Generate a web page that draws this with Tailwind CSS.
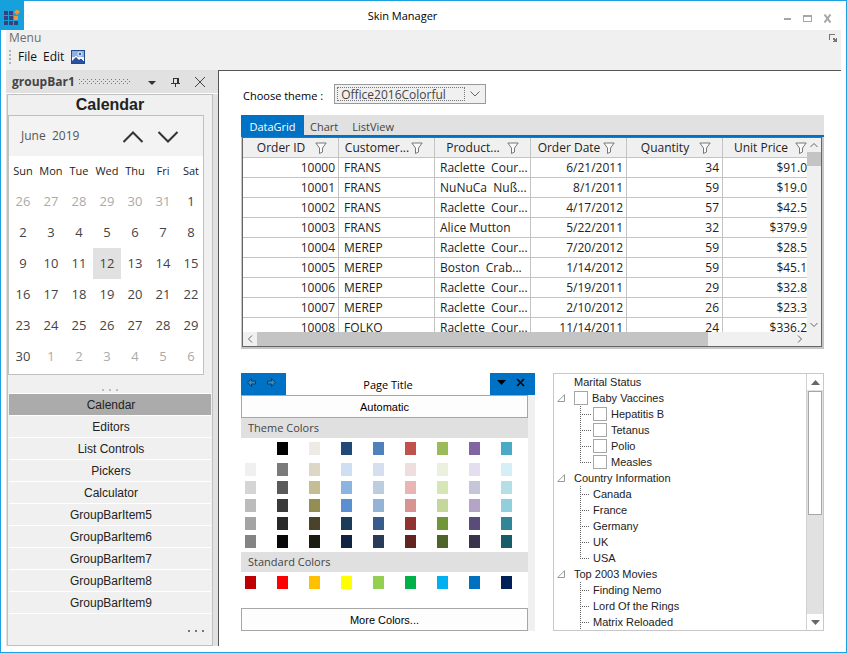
<!DOCTYPE html>
<html lang="en">
<head>
<meta charset="utf-8">
<title>Skin Manager</title>
<script src="https://cdn.jsdelivr.net/npm/@tailwindcss/browser@4"></script>
</head>
<body class="bg-white">
<div class="flex min-h-screen flex-col border border-[#1ba1e2] bg-white font-['Open_Sans','Noto_Sans',sans-serif] text-xs text-[#222]">

  <header class="flex h-[29px] items-center">
    <div class="-mt-px -ml-px flex h-[30px] w-6 justify-center bg-[#16a0dc] pt-[10px]">
      <svg class="h-4 w-4" viewBox="0 0 16 16" aria-hidden="true">
        <path fill="#34437c" d="M0 1h4v4H0zM5 1h4v4H5zM0 6h4v4H0zM5 6h4v4H5zM0 11h4v4H0zM5 11h4v4H5zM10 11h4v4h-4z"/>
        <path fill="#f2953a" d="M10 6h4v4h-4zM13 -1l3 3-3 3-3-3z"/>
      </svg>
    </div>
    <h1 class="flex-1 pt-px text-center text-[11px] text-black">Skin Manager</h1>
    <div class="flex items-center gap-2 pt-[6px] pr-[13px]">
      <button aria-label="Minimize" class="flex h-3 w-3 items-center justify-center"><svg class="h-[9px] w-[9px]" viewBox="0 0 9 9"><path fill="#a6a6a6" d="M1 4h7v2H1z"/></svg></button>
      <button aria-label="Maximize" class="flex h-3 w-3 items-center justify-center"><svg class="h-[9px] w-[9px]" viewBox="0 0 9 9"><path fill="#a6a6a6" fill-rule="evenodd" d="M0 1h9v7H0zM1 3v4h7V3z"/></svg></button>
      <button aria-label="Close" class="flex h-3 w-3 items-center justify-center"><svg class="h-[9px] w-[9px]" viewBox="0 0 9 9"><path stroke="#a6a6a6" stroke-width="2" d="M1.500 .5l6 8M7.500 .5l-6 8"/></svg></button>
    </div>
  </header>

  <div class="mx-[5px] mb-[6px] flex flex-1 flex-col">
    <div class="h-10 bg-[#f0f0f0]">
      <div class="flex h-[15px] items-center justify-between pr-1 pl-[3px] text-[#6d6d6d]">
        <span>Menu</span>
        <svg class="h-2 w-2" viewBox="0 0 8 8" aria-hidden="true"><path fill="#777" d="M0 0h6v1H1v5H0zM4 4h2v1h1V4h1v4H4V7h1V6H4z"/></svg>
      </div>
      <nav class="flex h-6 items-center pl-[3px] text-[#111]">
        <svg class="mr-[7px] h-[14px] w-[2px]" viewBox="0 0 2 14" aria-hidden="true"><path fill="#b4b4b4" d="M0 0h2v2H0zM0 4h2v2H0zM0 8h2v2H0zM0 12h2v2H0z"/></svg>
        <button class="mr-[6px]">File</button>
        <button class="mr-[7px]">Edit</button>
        <button aria-label="Picture">
          <svg class="h-[14px] w-[14px]" viewBox="0 0 14 14"><rect width="14" height="14" fill="#23498f"/><rect x="1" y="1" width="12" height="12" fill="#eef3fb"/><path fill="#8eafe0" d="M1 1h12v6H1z"/><circle cx="9" cy="4" r="2" fill="#3565b5" stroke="#f6faff"/><path fill="#29519f" d="M1 11l4-4 3 3 2-2 3 3v2H1z"/><path fill="none" stroke="#fff" d="M1 10l4-4 3 3 2-1 3 3"/></svg>
        </button>
      </nav>
    </div>

    <div class="flex flex-1">
      <aside class="flex w-[212px] shrink-0 flex-col bg-[#e1e1e1]">
        <div class="flex h-6 items-center border-b border-white pr-[12px] pl-[6px]">
          <h2 class="font-bold text-[#444]">groupBar1</h2>
          <svg class="ml-1 h-[6px] w-[52px]" aria-hidden="true"><defs><pattern id="grip" width="4" height="4" patternUnits="userSpaceOnUse"><path fill="#777" d="M0 0h1v1H0zM2 2h1v1H2z"/></pattern></defs><rect width="52" height="6" fill="url(#grip)"/></svg>
          <div class="ml-auto flex items-center gap-3">
            <button aria-label="Options"><svg class="h-3 w-3" viewBox="0 0 12 12"><path fill="#333" d="M2 5h8L6 9z"/></svg></button>
            <button aria-label="Pin"><svg class="h-3 w-3" viewBox="0 0 12 12"><path fill="#333" fill-rule="evenodd" d="M3 2h6v5h1v1H6v3H5V8H1V7h2zM4 3v4h3V3z"/></svg></button>
            <button aria-label="Close panel"><svg class="h-3 w-3" viewBox="0 0 12 12"><path stroke="#444" d="M1 1l10 10M11 1L1 11"/></svg></button>
          </div>
        </div>

        <div class="mr-[5px] ml-px flex flex-1 flex-col border border-[#c0c0c0] bg-[#f0f0f0]">
          <h3 class="h-5 text-center font-['Liberation_Sans',Arial,sans-serif] text-base leading-5 font-bold">Calendar</h3>
          <div class="mr-2 overflow-hidden border border-[#c0c0c0] bg-white pb-0.5">
            <div class="flex h-10 items-center bg-[#f3f3f3] pl-3 text-[#555]">
              <span>June&nbsp; 2019</span>
              <div class="mr-6 ml-auto flex gap-[13px] pt-0.5">
                <button aria-label="Previous month"><svg class="h-3 w-[22px]" viewBox="0 0 22 12"><path fill="none" stroke="#333" stroke-width="2" d="M1.500 11L11 1.500l9.500 9.500"/></svg></button>
                <button aria-label="Next month"><svg class="h-3 w-[22px]" viewBox="0 0 22 12"><path fill="none" stroke="#333" stroke-width="2" d="M1.500 1L11 10.500l9.500-9.500"/></svg></button>
              </div>
            </div>
            <div class="-mr-0.5">
              <table class="w-full table-fixed text-center text-[13px] text-[#444]">
                <thead><tr class="h-[30px] text-[11px] text-[#222]"><th class="font-normal">Sun</th><th class="font-normal">Mon</th><th class="font-normal">Tue</th><th class="font-normal">Wed</th><th class="font-normal">Thu</th><th class="font-normal">Fri</th><th class="font-normal">Sat</th></tr></thead>
                <tbody id="days"></tbody>
              </table>
            </div>
          </div>
          <svg class="mt-[14px] mb-[2px] h-[2px] w-4 self-center" viewBox="0 0 16 2" aria-hidden="true"><path fill="#bdbdbd" d="M0 0h2v2H0zM7 0h2v2H7zM14 0h2v2h-2z"/></svg>
          <div id="groups" class="mx-px flex flex-col border-t border-white font-['Liberation_Sans',Arial,sans-serif]"></div>
          <button aria-label="More groups" class="mt-4 mr-2 self-end"><svg class="h-[2px] w-4" viewBox="0 0 16 2"><path fill="#777" d="M0 0h2v2H0zM7 0h2v2H7zM14 0h2v2h-2z"/></svg></button>
        </div>
      </aside>

      <main class="min-w-0 flex-1 border-t border-l border-[#555] bg-white pt-[13px] pr-[17px] pl-[22px]">
        <div class="flex items-center">
          <label for="theme" class="mt-1 mr-[11px] ml-[2px] text-[11px] text-black">Choose theme :</label>
          <div class="relative h-5 w-[152px] border border-[#999] bg-[#f0f0f0] p-[2px]">
            <select id="theme" class="block h-[14px] w-[128px] appearance-none border border-dotted border-[#777] bg-transparent pl-[3px] leading-[14px] text-[#444] outline-none"><option>Office2016Colorful</option></select>
            <svg class="pointer-events-none absolute top-[6px] right-[5px] h-[6px] w-[10px]" viewBox="0 0 10 6" aria-hidden="true"><path fill="none" stroke="#666" d="M.5.5L5 5 9.500.5"/></svg>
          </div>
        </div>

        <section class="mt-[11px]">
          <div role="tablist" class="flex h-[22px] border-b-2 border-[#0072c6] bg-[#e1e1e1] text-[11px] text-[#444]">
            <button role="tab" aria-selected="true" class="h-[22px] w-[63px] bg-[#0072c6] pt-0.5 text-white">DataGrid</button>
            <button role="tab" class="ml-[6px] h-[22px] pt-0.5">Chart</button>
            <button role="tab" class="ml-[14px] h-[22px] pt-0.5">ListView</button>
          </div>
          <div class="border-r-2 border-b-2 border-l border-[#c6c6c6]">
            <div class="border border-[#666]">
              <div class="flex h-[194px]">
                <div class="min-w-0 flex-1 overflow-hidden">
                  <table class="w-[576px] table-fixed border-separate border-spacing-0">
                    <thead><tr id="heads" class="h-5 bg-[#f0f0f0]"></tr></thead>
                    <tbody id="orders"></tbody>
                  </table>
                </div>
                <div class="flex w-[14px] flex-col items-center bg-[#f0f0f0]">
                  <svg class="my-1 h-[6px] w-2" viewBox="0 0 8 6"><path fill="none" stroke="#666" d="M.5 5L4 1.500 7.500 5"/></svg>
                  <div class="h-[14px] w-full bg-[#c4c4c4]"></div>
                  <svg class="mt-auto mb-1 h-[6px] w-2" viewBox="0 0 8 6"><path fill="none" stroke="#666" d="M.5 1L4 4.500 7.500 1"/></svg>
                </div>
              </div>
              <div class="flex h-[14px] items-center bg-[#f0f0f0]">
                <svg class="mx-1 h-2 w-[6px]" viewBox="0 0 6 8"><path fill="none" stroke="#666" d="M5 .5L1.500 4 5 7.500"/></svg>
                <div class="h-full w-[78%] bg-[#c4c4c4]"></div>
                <svg class="mr-[18px] ml-auto h-2 w-[6px]" viewBox="0 0 6 8"><path fill="none" stroke="#666" d="M1 .5L4.500 4 1 7.500"/></svg>
              </div>
            </div>
          </div>
        </section>

        <div class="mt-6 grid grid-cols-[294fr_271fr] gap-[18px]">
          <section>
            <div class="flex h-[22px]">
              <div class="flex w-[45px] items-start gap-2 bg-[#0072c6] pt-[5px] pl-[6px]">
                <button aria-label="Back" class="block"><svg class="h-[9px] w-[9px]" viewBox="0 0 9 9"><path fill="#3f86b4" stroke="#0b4070" d="M.7 4.500l3.800-4v2.500h4v3h-4v2.500z"/></svg></button>
                <button aria-label="Forward" class="ml-[3px] block"><svg class="h-[9px] w-[9px]" viewBox="0 0 9 9"><path fill="#3f86b4" stroke="#0b4070" d="M8.300 4.500l-3.800-4v2.500h-4v3h4v2.500z"/></svg></button>
              </div>
              <h2 class="flex-1 text-center text-[11px] leading-6 text-black">Page Title</h2>
              <div class="flex w-[45px] items-start gap-[10px] bg-[#0072c6] pt-[5px] pl-[7px]">
                <button aria-label="Page menu" class="block"><svg class="h-[9px] w-[9px]" viewBox="0 0 9 9"><path d="M0 2h9L4.500 7z"/></svg></button>
                <button aria-label="Close page" class="block"><svg class="h-[9px] w-[9px]" viewBox="0 0 9 9"><path stroke="#000" stroke-width="1.500" d="M1 1l7 7M8 1L1 8"/></svg></button>
              </div>
            </div>
            <div class="border-r-[7px] border-[#f0f0f0]">
              <button class="block h-[23px] w-full border border-[#a6a6a6] bg-[#fdfdfd] pt-px font-['Liberation_Sans',Arial,sans-serif] text-[11px] text-black">Automatic</button>
              <h3 class="h-5 bg-[#e0e0e0] pl-[7px] text-[11px] leading-5 text-[#444]">Theme Colors</h3>
              <div id="base" class="flex justify-between pt-1 pr-4 pl-1"></div>
              <div id="shades" class="mt-2 mb-1 flex flex-col gap-[5px] pr-4 pl-1"></div>
              <h3 class="h-5 bg-[#e0e0e0] pl-[7px] text-[11px] leading-5 text-[#444]">Standard Colors</h3>
              <div id="standard" class="mb-[19px] flex justify-between pt-1 pr-4 pl-1"></div>
              <button class="block h-[23px] w-full border border-[#a6a6a6] bg-[#fdfdfd] pt-px font-['Liberation_Sans',Arial,sans-serif] text-[11px] text-black">More Colors...</button>
            </div>
          </section>

          <section class="flex border border-[#c8c8c8] font-['Liberation_Sans',Arial,sans-serif] text-[11px]">
            <ul id="tree" class="flex-1"></ul>
            <div class="flex w-[17px] flex-col border-l border-[#d0d0d0] bg-[#e1e1e1]">
              <button aria-label="Scroll up" class="flex h-4 items-center justify-center bg-white"><svg class="h-[5px] w-[9px]" viewBox="0 0 9 5"><path fill="#666" d="M0 5h9L4.500 0z"/></svg></button>
              <div class="mx-px mt-px h-[124px] border border-[#a6a6a6] bg-white"></div>
              <button aria-label="Scroll down" class="mt-auto flex h-4 items-center justify-center bg-white"><svg class="h-[5px] w-[9px]" viewBox="0 0 9 5"><path fill="#666" d="M0 0h9L4.500 5z"/></svg></button>
            </div>
          </section>
        </div>
      </main>
    </div>
  </div>
</div>

<script>
const put = (id, html) => { document.getElementById(id).innerHTML = html; };

// June 2019, starting on Sunday 26 May
const start = new Date(2019, 4, 26);
let days = '';
for (let w = 0; w < 6; w++) {
  days += '<tr class="h-[31px]">';
  for (let d = 0; d < 7; d++) {
    const day = new Date(start.getFullYear(), start.getMonth(), start.getDate() + w * 7 + d);
    const cls = day.getMonth() !== 5 ? 'text-[#aaa]' : day.getDate() === 12 ? 'bg-[#e1e1e1]' : '';
    days += `<td class="${cls}">${day.getDate()}</td>`;
  }
  days += '</tr>';
}
put('days', days);

put('groups', ['Calendar', 'Editors', 'List Controls', 'Pickers', 'Calculator', 'GroupBarItem5', 'GroupBarItem6', 'GroupBarItem7', 'GroupBarItem8', 'GroupBarItem9']
  .map((g, i) => `<button class="h-[22px] border-b border-white pl-0.5 ${i ? '' : 'bg-[#ababab]'}">${g}</button>`).join(''));

const funnel = '<svg class="h-3 w-3" viewBox="0 0 12 12" aria-hidden="true"><path fill="#fafafa" stroke="#777" d="M.8 1h10.400L7.500 6v4L4.500 11.500V6z"/></svg>';
put('heads', ['Order ID', 'Customer...', 'Product...', 'Order Date', 'Quantity', 'Unit Price']
  .map((h, i) => `<th class="${i ? 'w-24' : ''} border-r border-b border-[#c4c4c4] p-0 font-normal"><div class="flex items-center pr-[11px] pl-1"><span class="flex-1 text-center whitespace-nowrap">${h}</span>${funnel}</div></th>`).join(''));

const rows = [
  ['10000', 'FRANS', 'Raclette&nbsp; Cour...', '6/21/2011', '34', '$91.0'],
  ['10001', 'FRANS', 'NuNuCa&nbsp; Nuß...', '8/1/2011', '59', '$19.0'],
  ['10002', 'FRANS', 'Raclette&nbsp; Cour...', '4/17/2012', '57', '$42.5'],
  ['10003', 'FRANS', 'Alice Mutton', '5/22/2011', '32', '$379.9'],
  ['10004', 'MEREP', 'Raclette&nbsp; Cour...', '7/20/2012', '59', '$28.5'],
  ['10005', 'MEREP', 'Boston&nbsp; Crab...', '1/14/2012', '59', '$45.1'],
  ['10006', 'MEREP', 'Raclette&nbsp; Cour...', '5/19/2011', '29', '$32.8'],
  ['10007', 'MEREP', 'Raclette&nbsp; Cour...', '2/10/2012', '26', '$23.3'],
  ['10008', 'FOLKO', 'Raclette&nbsp; Cour...', '11/14/2011', '24', '$336.2']
];
const align = ['pr-[3px] text-right', 'pl-[5px]', 'pl-[5px]', 'pr-[3px] text-right', 'pr-[3px] text-right', 'pr-[11px] text-right'];
put('orders', rows.map(r => '<tr class="h-5">' + r.map((c, i) =>
  `<td class="border-r border-b border-[#c4c4c4] py-0 leading-4 whitespace-nowrap ${align[i]}">${c}</td>`).join('') + '</tr>').join(''));

const swatches = list => list.split(' ').map(c => `<button class="h-[13px] w-[11px]" aria-label="#${c}" style="background:#${c}"></button>`).join('');
put('base', swatches('ffffff 000000 eeeae5 1f4a78 4f82bc c0514c 9bbb58 8065a2 4babc7'));
put('shades', [
  'f0f0f0 7b7b7b ddd7c5 cddff1 d5dff0 efdede ecf0de e5deef d6eef5',
  'd5d5d5 5a5a5a c5be95 8bb4df bbcddf e8b5b5 d6e7b5 c5c6d8 b4dfe6',
  'bcbcbc 3a3a3a 938e53 5a8fd2 93b4d6 d79492 c5d79a b4a5c8 92cfde',
  'a4a4a4 292929 494429 1a3b5a 385d8c 93332f 719638 5a4c7a 308599',
  '848484 080808 1a1c12 112342 283b5b 632321 4f6428 39334b 175c6b'
].map(l => `<div class="flex justify-between">${swatches(l)}</div>`).join(''));
put('standard', swatches('c00000 ff0000 ffc000 ffff00 93cf50 00b149 00b0f0 0070c0 002058'));

const box = id => `<input type="checkbox" id="${id}" class="mr-1 h-[14px] w-[14px] appearance-none border border-[#a6a6a6] bg-white">`;
const arrow = '<svg class="mr-[9px] h-2 w-2" viewBox="0 0 8 8" aria-hidden="true"><path fill="none" stroke="#999" d="M.7 7.500L7.500.7v6.800z"/></svg>';
const tree = [['Marital Status', 0], ['Baby Vaccines', 1, 1], ['Hepatitis B', 2, 1], ['Tetanus', 2, 1], ['Polio', 2, 1], ['Measles', 2, 1, 1],
  ['Country Information', 1], ['Canada', 2], ['France', 2], ['Germany', 2], ['UK', 2], ['USA', 2, 0, 1],
  ['Top 2003 Movies', 1], ['Finding Nemo', 2], ['Lord Of the Rings', 2], ['Matrix Reloaded', 2]];
put('tree', tree.map(([name, level, check, last], i) => {
  const pad = ['pl-5', 'pl-[3px]', 'pl-[26px]'][level];
  const branch = `<svg class="${check ? 'mr-[2px]' : 'mr-[2px]'} h-4 w-[11px]" viewBox="0 0 11 16" aria-hidden="true"><path fill="none" stroke="#666" stroke-dasharray="1 1" d="M.5 0V${last ? 8 : 16}M0 8.500h${check ? 11 : 9}"/></svg>`;
  const label = check ? box('n' + i) + `<label for="n${i}">${name}</label>` : `<span>${name}</span>`;
  return `<li class="flex h-4 items-center whitespace-nowrap ${pad}">${level === 1 ? arrow : level === 2 ? branch : ''}${label}</li>`;
}).join(''));
</script>
</body>
</html>
